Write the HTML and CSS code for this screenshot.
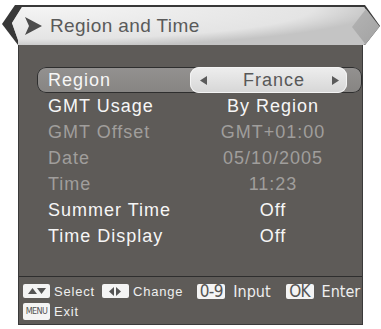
FILE: index.html
```html
<!DOCTYPE html>
<html>
<head>
<meta charset="utf-8">
<link rel="stylesheet" href="styles.css">
</head>
<body>
<div class="screen">
  <header class="title">
    <div class="title-inner">
      <svg class="title-arrow" width="18" height="18" viewBox="0 0 18 18"><polygon points="0,0 17,9 0,18 4,9" fill="#4c4c4c"/></svg>
      <span class="title-text">Region and Time</span>
    </div>
  </header>
  <section class="panel">
    <div class="rows">
      <div class="row selected">
        <span class="label">Region</span>
        <span class="value">
          <svg class="arr" width="7" height="9" viewBox="0 0 7 9"><polygon points="7,0 0,4.5 7,9" fill="#5a5a5a"/></svg>
          <span class="val">France</span>
          <svg class="arr" width="7" height="9" viewBox="0 0 7 9"><polygon points="0,0 7,4.5 0,9" fill="#5a5a5a"/></svg>
        </span>
      </div>
      <div class="row"><span class="label">GMT Usage</span><span class="value">By Region</span></div>
      <div class="row disabled"><span class="label">GMT Offset</span><span class="value">GMT+01:00</span></div>
      <div class="row disabled"><span class="label">Date</span><span class="value">05/10/2005</span></div>
      <div class="row disabled"><span class="label">Time</span><span class="value">11:23</span></div>
      <div class="row"><span class="label">Summer Time</span><span class="value">Off</span></div>
      <div class="row"><span class="label">Time Display</span><span class="value">Off</span></div>
    </div>
    <footer class="help">
      <div class="help-row">
        <span class="group">
          <span class="key key-icon"><svg width="18" height="6" viewBox="0 0 18 6"><polygon points="0,6 4.5,0 9,6" fill="#555"/><polygon points="9,0 18,0 13.5,6" fill="#555"/></svg></span>
          <span class="hint">Select</span>
        </span>
        <span class="group g2">
          <span class="key key-icon"><svg width="12" height="9" viewBox="0 0 12 9"><polygon points="5,0 0,4.5 5,9" fill="#555"/><polygon points="7,0 12,4.5 7,9" fill="#555"/></svg></span>
          <span class="hint">Change</span>
        </span>
        <span class="group g3">
          <span class="key key-text">0-9</span>
          <span class="hint big">Input</span>
        </span>
        <span class="group g4">
          <span class="key key-text">OK</span>
          <span class="hint big">Enter</span>
        </span>
      </div>
      <div class="help-row">
        <span class="group">
          <span class="key key-menu">MENU</span>
          <span class="hint">Exit</span>
        </span>
      </div>
    </footer>
  </section>
</div>
</body>
</html>
```

FILE: styles.css
```css
html, body {
  margin: 0;
  padding: 0;
  background: #ffffff;
}

body {
  font-family: "Liberation Sans", Arial, sans-serif;
}

.screen {
  width: 381px;
  height: 329px;
  padding-top: 5px;
  box-sizing: border-box;
}

/* ---------- title bar ---------- */
.title {
  position: relative;
  margin-left: 2px;
  width: 378px;
  height: 40px;
  background: #383838;
  clip-path: polygon(13px 0, 363px 0, 378px 21px, 363px 40px, 16px 40px, 0 19px);
}

.title-inner {
  height: 40px;
  display: flex;
  align-items: center;
  padding-top: 2px;
  box-sizing: border-box;
  background: radial-gradient(ellipse 340px 40px at 40px 2px, #f4f4f4 0%, #e4e4e4 80%, #c4c4c4 100%);
  background-color: #c2c2c2;
  clip-path: polygon(20px 2px, 362px 2px, 376px 21px, 362px 40px, 16px 40px, 16px 35px, 10px 18px);
}

.title::after {
  content: "";
  position: absolute;
  left: 350px;
  top: 4px;
  width: 28px;
  height: 36px;
  background: linear-gradient(135deg, #b4b4b4, #a2a2a2);
  clip-path: polygon(50% 0, 100% 50%, 50% 100%, 0 50%);
}

.title-arrow {
  margin-left: 23px;
  flex: none;
}

.title-text {
  margin-left: 7px;
  font-size: 19px;
  letter-spacing: 0.4px;
  color: #5a5a5a;
}

/* ---------- panel ---------- */
.panel {
  margin-left: 18px;
  width: 345px;
  height: 280px;
  box-sizing: border-box;
  background: #5e5b58;
  border: 1px solid #3a3a3a;
  border-top: none;
  display: flex;
  flex-direction: column;
}

.rows {
  padding: 22px 0 0 18px;
}

.row {
  display: grid;
  grid-template-columns: 153px 157px;
  height: 26px;
  align-items: center;
  font-size: 18px;
  letter-spacing: 1px;
  color: #f6f6f6;
}

.row .label {
  padding-left: 11px;
}

.row .value {
  padding-left: 9px;
  text-align: center;
}

.row.disabled {
  color: #a09e9c;
}

.row.selected {
  background: linear-gradient(#939190, #868482);
  border-radius: 9px;
  box-shadow: inset 0 0 0 1px #2e2e2e;
}

.row.selected .value {
  height: 26px;
  box-sizing: border-box;
  display: flex;
  align-items: center;
  padding: 0 8px 0 10px;
  background: linear-gradient(#eeeeee, #d6d6d6);
  border-radius: 9px;
  box-shadow: inset 0 0 0 1px #f4f4f4;
  color: #585858;
}

.row.selected .val {
  flex: 1;
  padding-left: 9px;
  text-align: center;
}

.arr {
  flex: none;
}

/* ---------- help footer ---------- */
.help {
  margin-top: auto;
  height: 48px;
  box-sizing: border-box;
  border-top: 1px solid #2e2e2e;
  padding: 5px 0 0 4px;
  display: flex;
  flex-direction: column;
  gap: 2px;
}

.help-row {
  display: flex;
  align-items: center;
  height: 18px;
}

.group {
  display: flex;
  align-items: center;
  gap: 4px;
}

.g2 { margin-left: 7px; }
.g3 { margin-left: 14px; }
.g4 { margin-left: 15px; }

.key {
  display: inline-flex;
  align-items: center;
  justify-content: center;
  background: #f4f4f4;
  border-radius: 2px;
  color: #555555;
  flex: none;
}

.key-icon {
  width: 27px;
  height: 14px;
}

.key-text {
  height: 15px;
  width: 28px;
  font-family: "DejaVu Sans Condensed", "DejaVu Sans", sans-serif;
  font-stretch: condensed;
  font-size: 17px;
  line-height: 15px;
  letter-spacing: -0.6px;
}

.key-menu {
  width: 27px;
  height: 17px;
  font-family: "DejaVu Sans Condensed", "DejaVu Sans", sans-serif;
  font-stretch: condensed;
  font-size: 9px;
  letter-spacing: -0.6px;
}

.hint {
  font-size: 13px;
  letter-spacing: 0.8px;
  color: #efefef;
}

.hint.big {
  margin-left: 4px;
  font-family: "DejaVu Sans Condensed", "DejaVu Sans", sans-serif;
  font-stretch: condensed;
  font-size: 16px;
  letter-spacing: 0;
}
```
